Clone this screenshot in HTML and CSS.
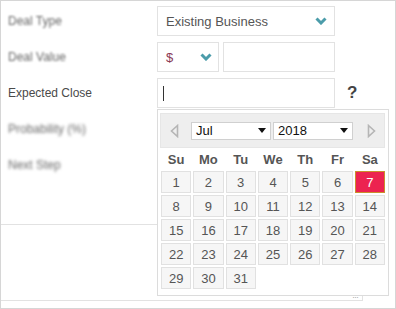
FILE: index.html
```html
<!DOCTYPE html>
<html>
<head>
<meta charset="utf-8">
<link rel="stylesheet" href="styles.css">
</head>
<body>
<div class="frame">
  <div class="form">
    <div class="row">
      <div class="label blur">Deal Type</div>
      <div class="select wide">
        <span class="val">Existing Business</span>
        <svg class="chev" width="12" height="8" viewBox="0 0 12 8"><polyline points="1.5,1.5 6,6 10.5,1.5" fill="none" stroke="#4b9caa" stroke-width="3"/></svg>
      </div>
    </div>
    <div class="row">
      <div class="label blur">Deal Value</div>
      <div class="select cur">
        <span class="val dollar">$</span>
        <svg class="chev" width="12" height="8" viewBox="0 0 12 8"><polyline points="1.5,1.5 6,6 10.5,1.5" fill="none" stroke="#4b9caa" stroke-width="3"/></svg>
      </div>
      <div class="input amount"></div>
    </div>
    <div class="row">
      <div class="label">Expected Close</div>
      <div class="input wide"><span class="caret"></span></div>
      <div class="help">?</div>
    </div>
    <div class="row">
      <div class="label blur2">Probability (%)</div>
      <div class="input wide"></div>
    </div>
    <div class="row last">
      <div class="label blur2">Next Step</div>
      <div class="input wide"></div>
    </div>
    <div class="notes"><span class="grip">&middot;&middot;&middot;</span></div>
  </div>

  <div class="picker">
    <div class="head">
      <svg class="arrow prev" width="9" height="14" viewBox="0 0 9 14"><polygon points="7.5,1.5 1.5,7 7.5,12.5" fill="none" stroke="#b5b5b5" stroke-width="1.6"/></svg>
      <div class="msel"><span>Jul</span><svg width="8" height="5" viewBox="0 0 8 5"><polygon points="0,0 8,0 4,5" fill="#111"/></svg></div>
      <div class="msel"><span>2018</span><svg width="8" height="5" viewBox="0 0 8 5"><polygon points="0,0 8,0 4,5" fill="#111"/></svg></div>
      <svg class="arrow next" width="9" height="14" viewBox="0 0 9 14"><polygon points="1.5,1.5 7.5,7 1.5,12.5" fill="none" stroke="#b5b5b5" stroke-width="1.6"/></svg>
    </div>
    <div class="grid">
      <div class="wd">Su</div><div class="wd">Mo</div><div class="wd">Tu</div><div class="wd">We</div><div class="wd">Th</div><div class="wd">Fr</div><div class="wd">Sa</div>
      <div class="d">1</div><div class="d">2</div><div class="d">3</div><div class="d">4</div><div class="d">5</div><div class="d">6</div><div class="d sel">7</div>
      <div class="d">8</div><div class="d">9</div><div class="d">10</div><div class="d">11</div><div class="d">12</div><div class="d">13</div><div class="d">14</div>
      <div class="d">15</div><div class="d">16</div><div class="d">17</div><div class="d">18</div><div class="d">19</div><div class="d">20</div><div class="d">21</div>
      <div class="d">22</div><div class="d">23</div><div class="d">24</div><div class="d">25</div><div class="d">26</div><div class="d">27</div><div class="d">28</div>
      <div class="d">29</div><div class="d">30</div><div class="d">31</div>
    </div>
  </div>
</div>
</body>
</html>
```

FILE: styles.css
```css
html, body {
  margin: 0;
  padding: 0;
  background: #fff;
}
.frame {
  position: relative;
  width: 396px;
  height: 309px;
  box-sizing: border-box;
  border: 1px solid #d6d6d6;
  font-family: "Liberation Sans", Arial, sans-serif;
  color: #555;
  overflow: hidden;
}
.form {
  padding-top: 5px;
}
.row {
  display: flex;
  align-items: center;
  height: 30px;
  margin-bottom: 6px;
}
.row.last {
  margin-bottom: 0;
}
.label {
  width: 149px;
  padding-left: 7px;
  font-size: 12px;
  color: #4a4a4a;
}
.label.blur {
  color: #666;
  filter: blur(0.8px);
}
.label.blur2 {
  color: #6a6a6a;
  filter: blur(1.4px);
}
.select, .input {
  height: 30px;
  box-sizing: border-box;
  border: 1px solid #e2e2e2;
  background: #fff;
  display: flex;
  align-items: center;
}
.select {
  justify-content: space-between;
  padding: 0 7px 0 8px;
  font-size: 13px;
  color: #555;
}
.wide {
  width: 178px;
}
.select.cur {
  width: 62px;
  padding-right: 6px;
}
.dollar {
  color: #8a3a55;
}
.input.amount {
  width: 112px;
  margin-left: 4px;
}
.caret {
  display: block;
  width: 1px;
  height: 15px;
  margin-left: 5px;
  background: #333;
}
.help {
  margin-left: 12px;
  font-size: 17px;
  font-weight: bold;
  color: #444;
}
.notes {
  margin-top: 44px;
  width: 362px;
  height: 77px;
  box-sizing: border-box;
  border-top: 1px solid #e2e2e2;
  border-bottom: 1px solid #e2e2e2;
  border-right: 1px solid #e2e2e2;
  position: relative;
}
.grip {
  position: absolute;
  right: 4px;
  bottom: -2px;
  font-size: 9px;
  color: #aaa;
  letter-spacing: -1px;
}
.picker {
  position: absolute;
  left: 156px;
  top: 108px;
  width: 232px;
  height: 187px;
  box-sizing: border-box;
  border: 1px solid #dcdcdc;
  background: #fff;
  padding: 3px 2px 0 2px;
}
.head {
  display: flex;
  align-items: center;
  height: 35px;
  width: 225px;
  box-sizing: border-box;
  background: #eeeeee;
  border: 1px solid #e6e6e6;
  padding-left: 9px;
}
.arrow.prev {
  margin-right: 12px;
}
.arrow.next {
  margin-left: 14px;
}
.msel {
  width: 80px;
  height: 18px;
  box-sizing: border-box;
  background: #fff;
  border: 1px solid #d0d0d0;
  display: flex;
  align-items: center;
  justify-content: space-between;
  padding: 0 4px 0 4px;
  font-size: 13px;
  color: #111;
  margin-right: 2px;
}
.msel:last-of-type {
  margin-right: 0;
}
.grid {
  display: grid;
  grid-template-columns: repeat(7, 1fr);
  grid-auto-rows: 22px;
  grid-template-rows: 20px;
  gap: 2px;
  width: 224px;
  margin: 1px 0 0 1px;
}
.wd {
  display: flex;
  align-items: center;
  justify-content: center;
  font-size: 13px;
  font-weight: bold;
  color: #555;
}
.d {
  display: flex;
  align-items: center;
  justify-content: center;
  box-sizing: border-box;
  border: 1px solid #e1e1e1;
  background: #f6f6f6;
  font-size: 13px;
  color: #555;
}
.d.sel {
  background: #ec2350;
  border-color: #c9902c;
  color: #fff;
}
```
